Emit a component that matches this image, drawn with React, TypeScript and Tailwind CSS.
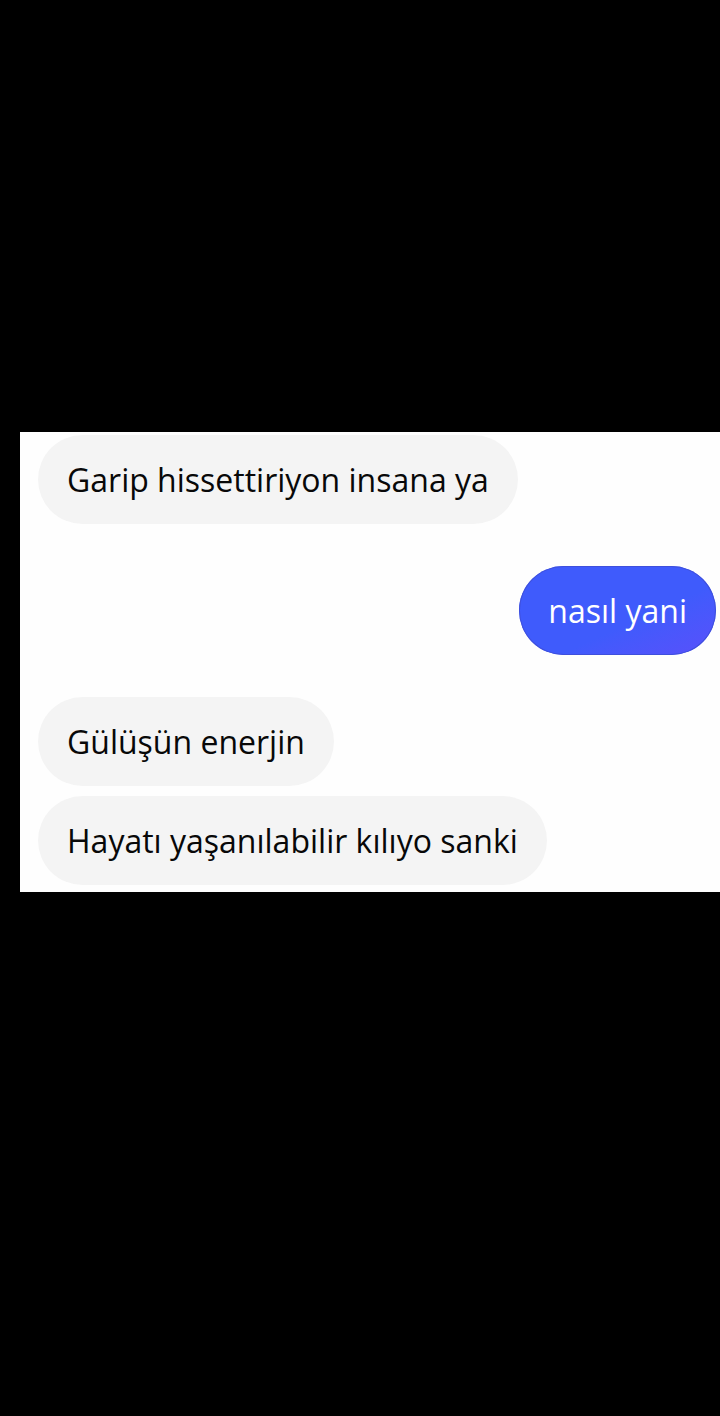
import React from 'react';

type Message = {
    id: number;
    text: string;
    mine?: boolean;
    spaced?: boolean;
};

const messages: Message[] = [
    { id: 1, text: 'Garip hissettiriyon insana ya' },
    { id: 2, text: 'nasıl yani', mine: true, spaced: true },
    { id: 3, text: 'Gülüşün enerjin', spaced: true },
    { id: 4, text: 'Hayatı yaşanılabilir kılıyo sanki' },
];

function Bubble({ message }: { message: Message }) {
    return (
        <li
            className={`flex ${message.mine ? 'justify-end' : 'justify-start'} ${message.spaced ? 'mt-8' : ''}`}
        >
            <p
                className={`rounded-full px-[29px] py-6 text-[32px] leading-[41px] ${
                    message.mine
                        ? 'bg-linear-to-br from-[#3f5bfc] from-60% to-[#5850fb] text-white inset-ring inset-ring-[#3f50dc]'
                        : 'bg-[#f4f4f4] text-[#080808]'
                }`}
            >
                {message.text}
            </p>
        </li>
    );
}

export default function App() {
    return (
        <div className="min-h-screen bg-black pt-[432px] pb-[524px] pl-5 font-['Open_Sans',sans-serif]">
            <main className="bg-[#fefefe] pt-[3px] pr-1 pb-[7px] pl-[18px]">
                <ul className="flex flex-col gap-2.5">
                    {messages.map((message) => (
                        <Bubble key={message.id} message={message} />
                    ))}
                </ul>
            </main>
        </div>
    );
}
